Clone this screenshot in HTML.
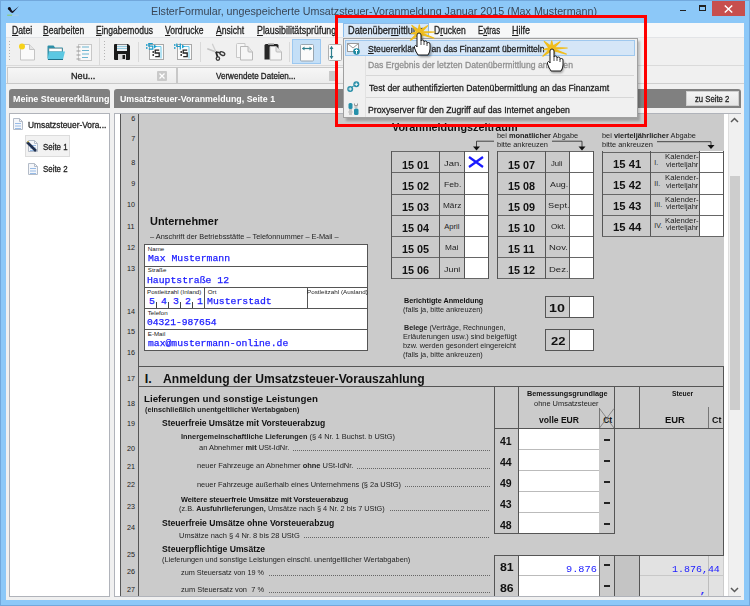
<!DOCTYPE html><html style=""><head><meta charset="utf-8">
<style>
*{margin:0;padding:0;box-sizing:border-box}
html,body{width:750px;height:606px;overflow:hidden}
body{position:relative;background:#8cc8f8;font-family:"Liberation Sans",sans-serif;color:#000}
.a{position:absolute}
.t{position:absolute;white-space:nowrap;line-height:1}
.ui{-webkit-text-stroke:0.3px currentColor}
.mo{-webkit-text-stroke:0.25px currentColor}
u{text-decoration:underline;text-underline-offset:0.5px;text-decoration-thickness:1px}
svg{position:absolute;overflow:visible}
</style></head><body style="">

<div class="a" style="left:0px;top:0px;width:750px;height:606px;border:1px solid #72a8dc"></div>
<div class="t" style="left: 151.09px; top: 6px; font-size: 11.8px; color: rgb(58, 70, 86); transform: scaleX(0.9082); transform-origin: 0px 0px;">ElsterFormular, ungespeicherte Umsatzsteuer-Voranmeldung Januar 2015 (Max Mustermann)</div>
<svg style="left:4px;top:2px" width="20" height="18"><path d="M4 6.2Q5 4.8 6.4 6Q7.5 8 8.6 9.2Q11 7.5 14.8 4.2Q12 7.5 9 10.8Q7.2 11.2 6 9.5Q4.8 8 4 6.2Z" fill="#151525"></path><circle cx="5.4" cy="6.4" r="1.5" fill="#101018"></circle><path d="M3.2 13.2h5" stroke="#8ccc6a" stroke-width="1.1"></path><path d="M8.2 13.2h6.6" stroke="#a8cce8" stroke-width="1"></path></svg>
<div class="a" style="left:680px;top:9.5px;width:6px;height:1.6px;background:#222"></div>
<div class="a" style="left:699px;top:5px;width:7px;height:6px;border:1px solid #222;border-top-width:2px"></div>
<div class="a" style="left:712px;top:1px;width:33px;height:15px;background:#c74f4e"></div>
<svg style="left:724px;top:5px" width="9" height="8"><path d="M0.8 0.5L8.2 7.5M8.2 0.5L0.8 7.5" stroke="#fff" stroke-width="1.5"></path></svg>
<div class="a" style="left:6px;top:23px;width:738px;height:577px;background:#f0f0f0"></div>
<div class="a" style="left:6px;top:23px;width:738px;height:14px;background:#f6f7f8"></div>
<div class="a" style="left:6px;top:37px;width:738px;height:1px;background:#e2e4e7"></div>
<div class="a" style="left:343px;top:23px;width:86px;height:14px;background:#d8e8f8;border:1px solid #8cbcea;border-bottom:none"></div>
<div class="t ui" style="left: 11.6px; top: 26px; font-size: 10.2px; color: rgb(30, 30, 30); transform: scaleX(0.8522); transform-origin: 0px 0px;"><u>D</u>atei</div>
<div class="t ui" style="left: 43.2px; top: 26px; font-size: 10.2px; color: rgb(30, 30, 30); transform: scaleX(0.8367); transform-origin: 0px 0px;"><u>B</u>earbeiten</div>
<div class="t ui" style="left: 96.4px; top: 26px; font-size: 10.2px; color: rgb(30, 30, 30); transform: scaleX(0.8382); transform-origin: 0px 0px;"><u>E</u>ingabemodus</div>
<div class="t ui" style="left: 165.3px; top: 26px; font-size: 10.2px; color: rgb(30, 30, 30); transform: scaleX(0.8413); transform-origin: 0px 0px;"><u>V</u>ordrucke</div>
<div class="t ui" style="left: 216.3px; top: 26px; font-size: 10.2px; color: rgb(30, 30, 30); transform: scaleX(0.8441); transform-origin: 0px 0px;"><u>A</u>nsicht</div>
<div class="t ui" style="left: 257.3px; top: 26px; font-size: 10.2px; color: rgb(30, 30, 30); transform: scaleX(0.8681); transform-origin: 0px 0px;"><u>P</u>lausibilitätsprüfung</div>
<div class="t ui" style="left: 347.8px; top: 26px; font-size: 10.2px; color: rgb(30, 30, 30); transform: scaleX(0.9024); transform-origin: 0px 0px;">Datenüber<u>m</u>ittlung</div>
<div class="t ui" style="left: 434.16px; top: 26px; font-size: 10.2px; color: rgb(30, 30, 30); transform: scaleX(0.8378); transform-origin: 0px 0px;">D<u>r</u>ucken</div>
<div class="t ui" style="left: 477.84px; top: 26px; font-size: 10.2px; color: rgb(30, 30, 30); transform: scaleX(0.7643); transform-origin: 0px 0px;">E<u>x</u>tras</div>
<div class="t ui" style="left: 512.4px; top: 26px; font-size: 10.2px; color: rgb(30, 30, 30); transform: scaleX(0.88); transform-origin: 0px 0px;"><u>H</u>ilfe</div>
<div class="a" style="left:6px;top:65px;width:738px;height:1px;background:#dadada"></div>
<div class="a" style="left:9px;top:41px;width:1px;height:21px;background:repeating-linear-gradient(#b4b4b4 0 1px,transparent 1px 3px)"></div>
<div class="a" style="left:104px;top:41px;width:1px;height:21px;background:repeating-linear-gradient(#b4b4b4 0 1px,transparent 1px 3px)"></div>
<div class="a" style="left:99px;top:38px;width:1px;height:27px;background:#d9d9d9"></div>
<div class="a" style="left:138px;top:42px;width:1px;height:20px;background:#d9d9d9"></div>
<div class="a" style="left:200px;top:42px;width:1px;height:20px;background:#d9d9d9"></div>
<div class="a" style="left:289px;top:42px;width:1px;height:20px;background:#d9d9d9"></div>
<div class="a" style="left:292px;top:39px;width:29px;height:25px;background:#c4dff7;border:1px solid #9cc8f0"></div>
<div class="a" style="left:6px;top:83px;width:738px;height:1px;background:#cfcfcf"></div>
<div class="a" style="left:7px;top:67px;width:170px;height:17px;background:linear-gradient(#f6f6f6,#ececec);border:1px solid #c8c8c8"></div>
<div class="t ui" style="left: 70.72px; top: 72px; font-size: 9.3px; color: rgb(32, 32, 32); transform: scaleX(0.9783); transform-origin: 0px 0px;">Neu...</div>
<div class="a" style="left:177px;top:67px;width:168px;height:17px;background:linear-gradient(#f6f6f6,#ececec);border:1px solid #c8c8c8"></div>
<div class="t ui" style="left: 215.6px; top: 72px; font-size: 9.3px; color: rgb(32, 32, 32); transform: scaleX(0.8681); transform-origin: 0px 0px;">Verwendete Dateien...</div>
<div class="a" style="left:157px;top:71px;width:10px;height:10px;background:#c9c9c9;border-radius:1px"></div>
<svg style="left:159px;top:73px" width="6" height="6"><path d="M0.5 0.5L5.5 5.5M5.5 0.5L0.5 5.5" stroke="#fff" stroke-width="1.3"></path></svg>
<div class="a" style="left:329px;top:71px;width:8px;height:10px;background:#c9c9c9"></div>
<div class="a" style="left:9px;top:89px;width:101px;height:19px;background:#808080;border-radius:3px 3px 0 0"></div>
<div class="a" style="left:114px;top:89px;width:627px;height:19px;background:#808080;border-radius:3px 3px 0 0"></div>
<div class="t" style="left: 13.26px; top: 95px; font-size: 8.6px; font-weight: bold; color: rgb(255, 255, 255); transform: scaleX(1.0407); transform-origin: 0px 0px;">Meine Steuererklärung</div>
<div class="t" style="left: 119.6px; top: 95px; font-size: 8.6px; font-weight: bold; color: rgb(255, 255, 255); transform: scaleX(1.0252); transform-origin: 0px 0px;">Umsatzsteuer-Voranmeldung, Seite 1</div>
<div class="a" style="left:686px;top:91px;width:53px;height:15px;background:linear-gradient(#f3f3f3,#e6e6e6);border:1px solid #cfcfcf"></div>
<div class="t ui" style="left: 695.2px; top: 95px; font-size: 9.3px; color: rgb(32, 32, 32); transform: scaleX(0.8293); transform-origin: 0px 0px;">zu Seite 2</div>
<div class="a" style="left:9px;top:113px;width:101px;height:484px;background:#fff;border:1px solid #b0b3ba"></div>
<div class="a" style="left:114px;top:113px;width:627px;height:484px;background:#fff;border:1px solid #b0b3ba"></div>
<svg style="left:13px;top:118px" width="10" height="12"><path d="M0.5 0.5h6l3 3v8h-9z" fill="#f4f6fa" stroke="#b4bcc8"></path><path d="M6.5 0.5v3h3" fill="none" stroke="#b4bcc8"></path><path d="M2 5.5h6M2 8h6M2 10.5h6" stroke="#8cb4e4" stroke-width="0.9"></path></svg>
<div class="t ui" style="left: 28px; top: 121px; font-size: 9.2px; color: rgb(30, 30, 30); transform: scaleX(0.907); transform-origin: 0px 0px;">Umsatzsteuer-Vora...</div>
<div class="a" style="left:25px;top:135px;width:45px;height:22px;background:#f2f2f2;border:1px solid #dcdcdc"></div>
<svg style="left:28px;top:140px" width="10" height="12"><path d="M0.5 0.5h6l3 3v8h-9z" fill="#f4f6fa" stroke="#b4bcc8"></path><path d="M6.5 0.5v3h3" fill="none" stroke="#b4bcc8"></path><path d="M2 5.5h6M2 8h6M2 10.5h6" stroke="#8cb4e4" stroke-width="0.9"></path></svg>
<svg style="left:26px;top:140px" width="13" height="13"><path d="M1 2L10 11" stroke="#1f2f4f" stroke-width="2.6"></path><path d="M1 2L3 1.5" stroke="#d8c050" stroke-width="1"></path></svg>
<div class="t ui" style="left: 42.6px; top: 143px; font-size: 9.2px; color: rgb(30, 30, 30); transform: scaleX(0.8571); transform-origin: 0px 0px;">Seite 1</div>
<svg style="left:28px;top:163px" width="10" height="12"><path d="M0.5 0.5h6l3 3v8h-9z" fill="#f4f6fa" stroke="#b4bcc8"></path><path d="M6.5 0.5v3h3" fill="none" stroke="#b4bcc8"></path><path d="M2 5.5h6M2 8h6M2 10.5h6" stroke="#8cb4e4" stroke-width="0.9"></path></svg>
<div class="t ui" style="left: 42.6px; top: 165px; font-size: 9.2px; color: rgb(30, 30, 30); transform: scaleX(0.8571); transform-origin: 0px 0px;">Seite 2</div>
<div class="a" style="left:115px;top:114px;width:5px;height:482px;background:#fff"></div>
<div class="a" style="left:120px;top:114px;width:604px;height:482px;background:#cbcbcb"></div>
<div class="a" style="left:120px;top:114px;width:1px;height:482px;background:#555"></div>
<div class="a" style="left:138px;top:114px;width:1px;height:482px;background:#555"></div>
<div class="a" style="left:728px;top:114px;width:13px;height:482px;background:#f0f0f0;border-left:1px solid #dedede"></div>
<div class="a" style="left:730px;top:176px;width:10px;height:234px;background:#cdcdcd"></div>
<svg style="left:730px;top:117px" width="9" height="6"><path d="M1 5L4.5 1.5L8 5" fill="none" stroke="#5a5a5a" stroke-width="1.5"></path></svg>
<svg style="left:730px;top:587px" width="9" height="6"><path d="M1 1L4.5 4.5L8 1" fill="none" stroke="#5a5a5a" stroke-width="1.5"></path></svg>
<div class="t" style="left:131.25px;top:115px;font-size:7.2px;color:#222;">6</div>
<div class="t" style="left:131.25px;top:135px;font-size:7.2px;color:#222;">7</div>
<div class="t" style="left:131.25px;top:159px;font-size:7.2px;color:#222;">8</div>
<div class="t" style="left:131.25px;top:180px;font-size:7.2px;color:#222;">9</div>
<div class="t" style="left:126.95px;top:201px;font-size:7.2px;color:#222;">10</div>
<div class="t" style="left:126.95px;top:223px;font-size:7.2px;color:#222;">11</div>
<div class="t" style="left:126.95px;top:244px;font-size:7.2px;color:#222;">12</div>
<div class="t" style="left:126.95px;top:265px;font-size:7.2px;color:#222;">13</div>
<div class="t" style="left:126.95px;top:308px;font-size:7.2px;color:#222;">14</div>
<div class="t" style="left:126.95px;top:328px;font-size:7.2px;color:#222;">15</div>
<div class="t" style="left:126.95px;top:349px;font-size:7.2px;color:#222;">16</div>
<div class="t" style="left:126.95px;top:375px;font-size:7.2px;color:#222;">17</div>
<div class="t" style="left:126.95px;top:400px;font-size:7.2px;color:#222;">18</div>
<div class="t" style="left:126.95px;top:420px;font-size:7.2px;color:#222;">19</div>
<div class="t" style="left:126.95px;top:445px;font-size:7.2px;color:#222;">20</div>
<div class="t" style="left:126.95px;top:463px;font-size:7.2px;color:#222;">21</div>
<div class="t" style="left:126.95px;top:481px;font-size:7.2px;color:#222;">22</div>
<div class="t" style="left:126.95px;top:503px;font-size:7.2px;color:#222;">23</div>
<div class="t" style="left:126.95px;top:524px;font-size:7.2px;color:#222;">24</div>
<div class="t" style="left:126.95px;top:551px;font-size:7.2px;color:#222;">25</div>
<div class="t" style="left:126.95px;top:568px;font-size:7.2px;color:#222;">26</div>
<div class="t" style="left:126.95px;top:586px;font-size:7.2px;color:#222;">27</div>
<div class="t" style="left: 392px; top: 122px; font-size: 11px; font-weight: bold; color: rgb(17, 17, 17); transform: scaleX(0.9843); transform-origin: 0px 0px;">Voranmeldungszeitraum</div>
<div class="t" style="left: 496.54px; top: 132px; font-size: 7px; color: rgb(34, 34, 34); transform: scaleX(1.0587); transform-origin: 0px 0px;">bei <b>monatlicher</b> Abgabe</div>
<div class="t" style="left: 496.53px; top: 141px; font-size: 7px; color: rgb(34, 34, 34); transform: scaleX(1.0652); transform-origin: 0px 0px;">bitte ankreuzen</div>
<div class="t" style="left: 601.55px; top: 132px; font-size: 7px; color: rgb(34, 34, 34); transform: scaleX(1.0534); transform-origin: 0px 0px;">bei <b>vierteljährlicher</b> Abgabe</div>
<div class="t" style="left: 601.53px; top: 141px; font-size: 7px; color: rgb(34, 34, 34); transform: scaleX(1.0652); transform-origin: 0px 0px;">bitte ankreuzen</div>
<svg style="left:0;top:0" width="750" height="606"><path d="M494 141.2 L476.5 141.2 L476.5 147" fill="none" stroke="#222" stroke-width="0.8"></path><path d="M473.0 146.5L480.0 146.5L476.5 150.5Z" fill="#111"></path></svg>
<svg style="left:0;top:0" width="750" height="606"><path d="M552 141.2 L582 141.2 L582 147" fill="none" stroke="#222" stroke-width="0.8"></path><path d="M578.5 146.5L585.5 146.5L582 150.5Z" fill="#111"></path></svg>
<svg style="left:0;top:0" width="750" height="606"><path d="M657 141.7 L711 141.7 L711 146" fill="none" stroke="#222" stroke-width="0.8"></path><path d="M707.5 145L714.5 145L711 149Z" fill="#111"></path></svg>
<div class="a" style="left:391px;top:151px;width:73px;height:127px;background:#cbcbcb"></div>
<div class="a" style="left:464px;top:151px;width:24px;height:127px;background:#fff"></div>
<div class="a" style="left:391px;top:151px;width:98px;height:1px;background:#666"></div>
<div class="a" style="left:391px;top:172px;width:98px;height:1px;background:#666"></div>
<div class="a" style="left:391px;top:194px;width:98px;height:1px;background:#666"></div>
<div class="a" style="left:391px;top:215px;width:98px;height:1px;background:#666"></div>
<div class="a" style="left:391px;top:236px;width:98px;height:1px;background:#666"></div>
<div class="a" style="left:391px;top:257px;width:98px;height:1px;background:#666"></div>
<div class="a" style="left:391px;top:278px;width:98px;height:1px;background:#666"></div>
<div class="a" style="left:391px;top:151px;width:1px;height:128px;background:#555"></div>
<div class="a" style="left:439px;top:151px;width:1px;height:128px;background:#555"></div>
<div class="a" style="left:464px;top:151px;width:1px;height:128px;background:#555"></div>
<div class="a" style="left:488px;top:151px;width:1px;height:128px;background:#555"></div>
<div class="t" style="left: 401.54px; top: 161px; font-size: 10.2px; font-weight: bold; color: rgb(17, 17, 17); transform: scaleX(1.0625); transform-origin: 0px 0px;">15 01</div>
<div class="t" style="left: 443.7px; top: 160px; font-size: 7.6px; color: rgb(34, 34, 34); transform: scaleX(1.2455); transform-origin: 0px 0px;">Jan.</div>
<div class="t" style="left: 401.54px; top: 182px; font-size: 10.2px; font-weight: bold; color: rgb(17, 17, 17); transform: scaleX(1.0625); transform-origin: 0px 0px;">15 02</div>
<div class="t" style="left: 443.81px; top: 181px; font-size: 7.6px; color: rgb(34, 34, 34); transform: scaleX(1.1417); transform-origin: 0px 0px;">Feb.</div>
<div class="t" style="left: 401.54px; top: 203px; font-size: 10.2px; font-weight: bold; color: rgb(17, 17, 17); transform: scaleX(1.0625); transform-origin: 0px 0px;">15 03</div>
<div class="t" style="left: 442.56px; top: 202px; font-size: 7.6px; color: rgb(34, 34, 34); transform: scaleX(1.0867); transform-origin: 0px 0px;">März</div>
<div class="t" style="left: 401.54px; top: 224px; font-size: 10.2px; font-weight: bold; color: rgb(17, 17, 17); transform: scaleX(1.0625); transform-origin: 0px 0px;">15 04</div>
<div class="t" style="left: 444.3px; top: 223px; font-size: 7.6px; color: rgb(34, 34, 34); transform: scaleX(1); transform-origin: 0px 0px;">April</div>
<div class="t" style="left: 401.54px; top: 245px; font-size: 10.2px; font-weight: bold; color: rgb(17, 17, 17); transform: scaleX(1.0625); transform-origin: 0px 0px;">15 05</div>
<div class="t" style="left: 444.71px; top: 244px; font-size: 7.6px; color: rgb(34, 34, 34); transform: scaleX(1.0909); transform-origin: 0px 0px;">Mai</div>
<div class="t" style="left: 401.54px; top: 266px; font-size: 10.2px; font-weight: bold; color: rgb(17, 17, 17); transform: scaleX(1.0625); transform-origin: 0px 0px;">15 06</div>
<div class="t" style="left: 444.18px; top: 266px; font-size: 7.6px; color: rgb(34, 34, 34); transform: scaleX(1.1727); transform-origin: 0px 0px;">Juni</div>
<div class="a" style="left:497px;top:151px;width:72px;height:127px;background:#cbcbcb"></div>
<div class="a" style="left:569px;top:151px;width:24px;height:127px;background:#fff"></div>
<div class="a" style="left:497px;top:151px;width:97px;height:1px;background:#666"></div>
<div class="a" style="left:497px;top:172px;width:97px;height:1px;background:#666"></div>
<div class="a" style="left:497px;top:194px;width:97px;height:1px;background:#666"></div>
<div class="a" style="left:497px;top:215px;width:97px;height:1px;background:#666"></div>
<div class="a" style="left:497px;top:236px;width:97px;height:1px;background:#666"></div>
<div class="a" style="left:497px;top:257px;width:97px;height:1px;background:#666"></div>
<div class="a" style="left:497px;top:278px;width:97px;height:1px;background:#666"></div>
<div class="a" style="left:497px;top:151px;width:1px;height:128px;background:#555"></div>
<div class="a" style="left:545px;top:151px;width:1px;height:128px;background:#555"></div>
<div class="a" style="left:569px;top:151px;width:1px;height:128px;background:#555"></div>
<div class="a" style="left:593px;top:151px;width:1px;height:128px;background:#555"></div>
<div class="t" style="left: 507.54px; top: 161px; font-size: 10.2px; font-weight: bold; color: rgb(17, 17, 17); transform: scaleX(1.0625); transform-origin: 0px 0px;">15 07</div>
<div class="t" style="left: 551.24px; top: 160px; font-size: 7.6px; color: rgb(34, 34, 34); transform: scaleX(1.01); transform-origin: 0px 0px;">Juli</div>
<div class="t" style="left: 507.54px; top: 182px; font-size: 10.2px; font-weight: bold; color: rgb(17, 17, 17); transform: scaleX(1.0625); transform-origin: 0px 0px;">15 08</div>
<div class="t" style="left: 549.7px; top: 181px; font-size: 7.6px; color: rgb(34, 34, 34); transform: scaleX(1.1692); transform-origin: 0px 0px;">Aug.</div>
<div class="t" style="left: 507.54px; top: 203px; font-size: 10.2px; font-weight: bold; color: rgb(17, 17, 17); transform: scaleX(1.0625); transform-origin: 0px 0px;">15 09</div>
<div class="t" style="left: 547.59px; top: 202px; font-size: 7.6px; color: rgb(34, 34, 34); transform: scaleX(1.2143); transform-origin: 0px 0px;">Sept.</div>
<div class="t" style="left: 507.54px; top: 224px; font-size: 10.2px; font-weight: bold; color: rgb(17, 17, 17); transform: scaleX(1.0625); transform-origin: 0px 0px;">15 10</div>
<div class="t" style="left: 550.9px; top: 223px; font-size: 7.6px; color: rgb(34, 34, 34); transform: scaleX(1.0667); transform-origin: 0px 0px;">Okt.</div>
<div class="t" style="left: 507.54px; top: 245px; font-size: 10.2px; font-weight: bold; color: rgb(17, 17, 17); transform: scaleX(1.0625); transform-origin: 0px 0px;">15 11</div>
<div class="t" style="left: 548.55px; top: 244px; font-size: 7.6px; color: rgb(34, 34, 34); transform: scaleX(1.25); transform-origin: 0px 0px;">Nov.</div>
<div class="t" style="left: 507.54px; top: 266px; font-size: 10.2px; font-weight: bold; color: rgb(17, 17, 17); transform: scaleX(1.0625); transform-origin: 0px 0px;">15 12</div>
<div class="t" style="left: 548.55px; top: 266px; font-size: 7.6px; color: rgb(34, 34, 34); transform: scaleX(1.25); transform-origin: 0px 0px;">Dez.</div>
<svg style="left:468px;top:156px" width="16" height="12"><path d="M1 1L15 11M15 1L1 11" stroke="#1a1aff" stroke-width="2.2"></path></svg>
<div class="a" style="left:602px;top:151px;width:97px;height:85px;background:#cbcbcb"></div>
<div class="a" style="left:699px;top:151px;width:24px;height:85px;background:#fff"></div>
<div class="a" style="left:602px;top:152px;width:122px;height:1px;background:#666"></div>
<div class="a" style="left:602px;top:172px;width:122px;height:1px;background:#666"></div>
<div class="a" style="left:602px;top:194px;width:122px;height:1px;background:#666"></div>
<div class="a" style="left:602px;top:215px;width:122px;height:1px;background:#666"></div>
<div class="a" style="left:602px;top:236px;width:122px;height:1px;background:#666"></div>
<div class="a" style="left:602px;top:151px;width:1px;height:85px;background:#555"></div>
<div class="a" style="left:650px;top:151px;width:1px;height:85px;background:#555"></div>
<div class="a" style="left:699px;top:151px;width:1px;height:85px;background:#555"></div>
<div class="a" style="left:723px;top:151px;width:1px;height:85px;background:#555"></div>
<div class="t" style="left: 612.79px; top: 160px; font-size: 10.2px; font-weight: bold; color: rgb(17, 17, 17); transform: scaleX(1.1083); transform-origin: 0px 0px;">15 41</div>
<div class="t" style="left:654.36px;top:159px;font-size:7px;color:#222;">I.</div>
<div class="t" style="left: 664.63px; top: 154px; font-size: 6.6px; color: rgb(34, 34, 34); transform: scaleX(1.1741); transform-origin: 0px 0px;">Kalender-</div>
<div class="t" style="left: 665.8px; top: 162px; font-size: 6.6px; color: rgb(34, 34, 34); transform: scaleX(1.1321); transform-origin: 0px 0px;">vierteljahr</div>
<div class="t" style="left: 612.79px; top: 181px; font-size: 10.2px; font-weight: bold; color: rgb(17, 17, 17); transform: scaleX(1.1083); transform-origin: 0px 0px;">15 42</div>
<div class="t" style="left:654.36px;top:180px;font-size:7px;color:#222;">II.</div>
<div class="t" style="left: 664.63px; top: 175px; font-size: 6.6px; color: rgb(34, 34, 34); transform: scaleX(1.1741); transform-origin: 0px 0px;">Kalender-</div>
<div class="t" style="left: 665.8px; top: 183px; font-size: 6.6px; color: rgb(34, 34, 34); transform: scaleX(1.1321); transform-origin: 0px 0px;">vierteljahr</div>
<div class="t" style="left: 612.79px; top: 202px; font-size: 10.2px; font-weight: bold; color: rgb(17, 17, 17); transform: scaleX(1.1083); transform-origin: 0px 0px;">15 43</div>
<div class="t" style="left:654.36px;top:201px;font-size:7px;color:#222;">III.</div>
<div class="t" style="left: 664.63px; top: 197px; font-size: 6.6px; color: rgb(34, 34, 34); transform: scaleX(1.1741); transform-origin: 0px 0px;">Kalender-</div>
<div class="t" style="left: 665.8px; top: 204px; font-size: 6.6px; color: rgb(34, 34, 34); transform: scaleX(1.1321); transform-origin: 0px 0px;">vierteljahr</div>
<div class="t" style="left: 612.79px; top: 223px; font-size: 10.2px; font-weight: bold; color: rgb(17, 17, 17); transform: scaleX(1.1083); transform-origin: 0px 0px;">15 44</div>
<div class="t" style="left:654.36px;top:222px;font-size:7px;color:#222;">IV.</div>
<div class="t" style="left: 664.63px; top: 218px; font-size: 6.6px; color: rgb(34, 34, 34); transform: scaleX(1.1741); transform-origin: 0px 0px;">Kalender-</div>
<div class="t" style="left: 665.8px; top: 225px; font-size: 6.6px; color: rgb(34, 34, 34); transform: scaleX(1.1321); transform-origin: 0px 0px;">vierteljahr</div>
<div class="t" style="left: 150.17px; top: 216px; font-size: 10.6px; font-weight: bold; color: rgb(17, 17, 17); transform: scaleX(1.0338); transform-origin: 0px 0px;">Unternehmer</div>
<div class="t" style="left: 149.93px; top: 233px; font-size: 7.6px; color: rgb(34, 34, 34); transform: scaleX(0.9724); transform-origin: 0px 0px;">– Anschrift der Betriebsstätte – Telefonnummer – E-Mail –</div>
<div class="a" style="left:144px;top:244px;width:224px;height:107px;background:#fff;border:1px solid #555"></div>
<div class="a" style="left:144px;top:266px;width:224px;height:1px;background:#555"></div>
<div class="a" style="left:144px;top:287px;width:224px;height:1px;background:#555"></div>
<div class="a" style="left:144px;top:308px;width:224px;height:1px;background:#555"></div>
<div class="a" style="left:144px;top:329px;width:224px;height:1px;background:#555"></div>
<div class="a" style="left:204px;top:287px;width:1px;height:22px;background:#555"></div>
<div class="a" style="left:307px;top:287px;width:1px;height:22px;background:#555"></div>
<div class="t" style="left:147.78px;top:246px;font-size:6.2px;color:#222;">Name</div>
<div class="t mo" style="left: 147.7px; top: 254px; font-size: 9.7px; color: rgb(26, 26, 255); font-family: &quot;Liberation Mono&quot;, monospace; transform: scaleX(1.0074); transform-origin: 0px 0px;">Max Mustermann</div>
<div class="t" style="left:147.78px;top:267px;font-size:6.2px;color:#222;">Straße</div>
<div class="t mo" style="left: 146.69px; top: 276px; font-size: 9.7px; color: rgb(26, 26, 255); font-family: &quot;Liberation Mono&quot;, monospace; transform: scaleX(1.0075); transform-origin: 0px 0px;">Hauptstraße 12</div>
<div class="t" style="left: 147px; top: 289px; font-size: 6.2px; color: rgb(34, 34, 34); transform: scaleX(1); transform-origin: 0px 0px;">Postleitzahl (Inland)</div>
<div class="t" style="left:207.78px;top:289px;font-size:6.2px;color:#222;">Ort</div>
<div class="t" style="left: 306.78px; top: 289px; font-size: 6.2px; color: rgb(34, 34, 34); transform: scaleX(1.0155); transform-origin: 0px 0px;">Postleitzahl (Ausland)</div>
<div class="t mo" style="left:148.91px;top:297px;font-size:9.7px;color:#1a1aff;font-family:'Liberation Mono',monospace;">5</div>
<div class="t mo" style="left:160.91px;top:297px;font-size:9.7px;color:#1a1aff;font-family:'Liberation Mono',monospace;">4</div>
<div class="t mo" style="left:172.91px;top:297px;font-size:9.7px;color:#1a1aff;font-family:'Liberation Mono',monospace;">3</div>
<div class="t mo" style="left:184.91px;top:297px;font-size:9.7px;color:#1a1aff;font-family:'Liberation Mono',monospace;">2</div>
<div class="t mo" style="left:196.91px;top:297px;font-size:9.7px;color:#1a1aff;font-family:'Liberation Mono',monospace;">1</div>
<div class="a" style="left:156px;top:302px;width:1px;height:6px;background:#444"></div>
<div class="a" style="left:168px;top:302px;width:1px;height:6px;background:#444"></div>
<div class="a" style="left:180px;top:302px;width:1px;height:6px;background:#444"></div>
<div class="a" style="left:192px;top:302px;width:1px;height:6px;background:#444"></div>
<div class="t mo" style="left: 207.2px; top: 297px; font-size: 9.7px; color: rgb(26, 26, 255); font-family: &quot;Liberation Mono&quot;, monospace; transform: scaleX(1.0111); transform-origin: 0px 0px;">Musterstadt</div>
<div class="t" style="left:147.78px;top:310px;font-size:6.2px;color:#222;">Telefon</div>
<div class="t mo" style="left: 147.1px; top: 318px; font-size: 9.7px; color: rgb(26, 26, 255); font-family: &quot;Liberation Mono&quot;, monospace; transform: scaleX(0.9957); transform-origin: 0px 0px;">04321-987654</div>
<div class="t" style="left:147.78px;top:331px;font-size:6.2px;color:#222;">E-Mail</div>
<div class="t mo" style="left: 147.5px; top: 339px; font-size: 9.7px; color: rgb(26, 26, 255); font-family: &quot;Liberation Mono&quot;, monospace; transform: scaleX(1.005); transform-origin: 0px 0px;">max@mustermann-online.de</div>
<div class="t" style="left: 404px; top: 297px; font-size: 7.2px; font-weight: bold; color: rgb(17, 17, 17); transform: scaleX(1.0051); transform-origin: 0px 0px;">Berichtigte Anmeldung</div>
<div class="t" style="left: 402.98px; top: 306px; font-size: 7.2px; color: rgb(34, 34, 34); transform: scaleX(1.0182); transform-origin: 0px 0px;">(falls ja, bitte ankreuzen)</div>
<div class="t" style="left: 404px; top: 324px; font-size: 7.2px; color: rgb(34, 34, 34); transform: scaleX(0.996); transform-origin: 0px 0px;"><b>Belege</b> (Verträge, Rechnungen,</div>
<div class="t" style="left: 402.97px; top: 333px; font-size: 7.2px; color: rgb(34, 34, 34); transform: scaleX(1.0275); transform-origin: 0px 0px;">Erläuterungen usw.) sind beigefügt</div>
<div class="t" style="left: 402.98px; top: 342px; font-size: 7.2px; color: rgb(34, 34, 34); transform: scaleX(1.0182); transform-origin: 0px 0px;">bzw. werden gesondert eingereicht</div>
<div class="t" style="left: 402.98px; top: 351px; font-size: 7.2px; color: rgb(34, 34, 34); transform: scaleX(1.0182); transform-origin: 0px 0px;">(falls ja, bitte ankreuzen)</div>
<div class="a" style="left:545px;top:296px;width:49px;height:22px;background:#fff;border:1px solid #555"></div>
<div class="a" style="left:546px;top:297px;width:23px;height:20px;background:#cbcbcb"></div>
<div class="a" style="left:569px;top:296px;width:1px;height:22px;background:#555"></div>
<div class="t" style="left: 549.2px; top: 304px; font-size: 10.2px; font-weight: bold; color: rgb(17, 17, 17); transform: scaleX(1.4); transform-origin: 0px 0px;">10</div>
<div class="a" style="left:545px;top:329px;width:49px;height:22px;background:#fff;border:1px solid #555"></div>
<div class="a" style="left:546px;top:330px;width:23px;height:20px;background:#cbcbcb"></div>
<div class="a" style="left:569px;top:329px;width:1px;height:22px;background:#555"></div>
<div class="t" style="left: 550.6px; top: 337px; font-size: 10.2px; font-weight: bold; color: rgb(17, 17, 17); transform: scaleX(1.2727); transform-origin: 0px 0px;">22</div>
<div class="a" style="left:139px;top:366px;width:585px;height:1px;background:#555"></div>
<div class="a" style="left:139px;top:386px;width:585px;height:1px;background:#555"></div>
<div class="t" style="left:144.76px;top:373px;font-size:12.6px;font-weight:bold;color:#111;">I.</div>
<div class="t" style="left: 163.4px; top: 373px; font-size: 12.6px; font-weight: bold; color: rgb(17, 17, 17); transform: scaleX(0.9616); transform-origin: 0px 0px;">Anmeldung der Umsatzsteuer-Vorauszahlung</div>
<div class="t" style="left: 144.1px; top: 394px; font-size: 9.8px; font-weight: bold; color: rgb(17, 17, 17); transform: scaleX(0.9954); transform-origin: 0px 0px;">Lieferungen und sonstige Leistungen</div>
<div class="t" style="left: 145.1px; top: 407px; font-size: 6.8px; font-weight: bold; color: rgb(34, 34, 34); transform: scaleX(1.0655); transform-origin: 0px 0px;">(einschließlich unentgeltlicher Wertabgaben)</div>
<div class="t" style="left: 162.33px; top: 419px; font-size: 8.8px; font-weight: bold; color: rgb(17, 17, 17); transform: scaleX(0.9683); transform-origin: 0px 0px;">Steuerfreie Umsätze mit Vorsteuerabzug</div>
<div class="t" style="left: 181px; top: 433px; font-size: 7.2px; color: rgb(34, 34, 34); transform: scaleX(1.024); transform-origin: 0px 0px;"><b>Innergemeinschaftliche Lieferungen</b> (§ 4 Nr. 1 Buchst. b UStG)</div>
<div class="t" style="left: 198.8px; top: 444px; font-size: 7.2px; color: rgb(34, 34, 34); transform: scaleX(1.0376); transform-origin: 0px 0px;">an Abnehmer <b>mit</b> USt-IdNr.</div>
<div class="t" style="left: 197.46px; top: 462px; font-size: 7.2px; color: rgb(34, 34, 34); transform: scaleX(1.0408); transform-origin: 0px 0px;">neuer Fahrzeuge an Abnehmer <b>ohne</b> USt-IdNr.</div>
<div class="t" style="left: 197.47px; top: 481px; font-size: 7.2px; color: rgb(34, 34, 34); transform: scaleX(1.0311); transform-origin: 0px 0px;">neuer Fahrzeuge außerhalb eines Unternehmens (§ 2a UStG)</div>
<div class="t" style="left: 180.5px; top: 496px; font-size: 7.2px; font-weight: bold; color: rgb(17, 17, 17); transform: scaleX(1.0152); transform-origin: 0px 0px;">Weitere steuerfreie Umsätze mit Vorsteuerabzug</div>
<div class="t" style="left: 179.48px; top: 505px; font-size: 7.2px; color: rgb(34, 34, 34); transform: scaleX(1.0215); transform-origin: 0px 0px;">(z.B. <b>Ausfuhrlieferungen,</b> Umsätze nach § 4 Nr. 2 bis 7 UStG)</div>
<div class="t" style="left: 161.62px; top: 519px; font-size: 8.8px; font-weight: bold; color: rgb(17, 17, 17); transform: scaleX(0.9766); transform-origin: 0px 0px;">Steuerfreie Umsätze ohne Vorsteuerabzug</div>
<div class="t" style="left: 179.46px; top: 532px; font-size: 7.2px; color: rgb(34, 34, 34); transform: scaleX(1.0421); transform-origin: 0px 0px;">Umsätze nach § 4 Nr. 8 bis 28 UStG</div>
<div class="t" style="left: 161.62px; top: 545px; font-size: 8.8px; font-weight: bold; color: rgb(17, 17, 17); transform: scaleX(0.9817); transform-origin: 0px 0px;">Steuerpflichtige Umsätze</div>
<div class="t" style="left: 161.58px; top: 556px; font-size: 7.2px; color: rgb(34, 34, 34); transform: scaleX(1.0224); transform-origin: 0px 0px;">(Lieferungen und sonstige Leistungen einschl. unentgeltlicher Wertabgaben)</div>
<div class="t" style="left: 180.5px; top: 569px; font-size: 7.2px; color: rgb(34, 34, 34); transform: scaleX(1.0136); transform-origin: 0px 0px;">zum Steuersatz von 19 %</div>
<div class="t" style="left: 180.5px; top: 586px; font-size: 7.2px; color: rgb(34, 34, 34); transform: scaleX(1.0392); transform-origin: 0px 0px;">zum Steuersatz von &nbsp;7 %</div>
<div class="a" style="left:293.3px;top:450.1px;width:196.3px;height:1px;background:repeating-linear-gradient(90deg,#666 0 1px,transparent 1px 2px)"></div>
<div class="a" style="left:357px;top:468.2px;width:132.60000000000002px;height:1px;background:repeating-linear-gradient(90deg,#666 0 1px,transparent 1px 2px)"></div>
<div class="a" style="left:404.9px;top:486.4px;width:84.70000000000005px;height:1px;background:repeating-linear-gradient(90deg,#666 0 1px,transparent 1px 2px)"></div>
<div class="a" style="left:390px;top:509.8px;width:99.60000000000002px;height:1px;background:repeating-linear-gradient(90deg,#666 0 1px,transparent 1px 2px)"></div>
<div class="a" style="left:304.4px;top:537.1px;width:185.20000000000005px;height:1px;background:repeating-linear-gradient(90deg,#666 0 1px,transparent 1px 2px)"></div>
<div class="a" style="left:269px;top:574.5px;width:220.60000000000002px;height:1px;background:repeating-linear-gradient(90deg,#666 0 1px,transparent 1px 2px)"></div>
<div class="a" style="left:269px;top:591.5px;width:220.60000000000002px;height:1px;background:repeating-linear-gradient(90deg,#666 0 1px,transparent 1px 2px)"></div>
<div class="a" style="left:494px;top:386px;width:230px;height:1px;background:#555"></div>
<div class="a" style="left:494px;top:386px;width:1px;height:148px;background:#555"></div>
<div class="a" style="left:518px;top:386px;width:1px;height:148px;background:#555"></div>
<div class="a" style="left:614px;top:386px;width:1px;height:148px;background:#555"></div>
<div class="a" style="left:639px;top:386px;width:1px;height:42px;background:#555"></div>
<div class="a" style="left:723px;top:366px;width:1px;height:230px;background:#555"></div>
<div class="a" style="left:494px;top:428px;width:230px;height:1px;background:#555"></div>
<div class="a" style="left:599px;top:408px;width:1px;height:20px;background:#777"></div>
<div class="a" style="left:708px;top:407px;width:1px;height:21px;background:#777"></div>
<div class="t" style="left: 526.7px; top: 391px; font-size: 6.8px; font-weight: bold; color: rgb(17, 17, 17); transform: scaleX(1.0707); transform-origin: 0px 0px;">Bemessungsgrundlage</div>
<div class="t" style="left: 533.61px; top: 401px; font-size: 6.8px; color: rgb(34, 34, 34); transform: scaleX(1.0948); transform-origin: 0px 0px;">ohne Umsatzsteuer</div>
<div class="t" style="left: 539.4px; top: 416px; font-size: 8.4px; font-weight: bold; color: rgb(17, 17, 17); transform: scaleX(1.0231); transform-origin: 0px 0px;">volle EUR</div>
<div class="t" style="left: 603.2px; top: 416px; font-size: 8.4px; font-weight: bold; color: rgb(17, 17, 17); transform: scaleX(1); transform-origin: 0px 0px;">Ct</div>
<svg style="left:599px;top:408px" width="16" height="20"><path d="M0.5 0.5L15 20M15 0.5L0.5 20" stroke="#777" stroke-width="0.8"></path></svg>
<div class="t" style="left: 671.9px; top: 391px; font-size: 6.8px; font-weight: bold; color: rgb(17, 17, 17); transform: scaleX(0.9952); transform-origin: 0px 0px;">Steuer</div>
<div class="t" style="left: 664.78px; top: 416px; font-size: 8.4px; font-weight: bold; color: rgb(17, 17, 17); transform: scaleX(1.1235); transform-origin: 0px 0px;">EUR</div>
<div class="t" style="left: 712px; top: 416px; font-size: 8.4px; font-weight: bold; color: rgb(17, 17, 17); transform: scaleX(1.0556); transform-origin: 0px 0px;">Ct</div>
<div class="a" style="left:519px;top:429px;width:80px;height:104px;background:#fff"></div>
<div class="a" style="left:519px;top:449px;width:80px;height:1px;background:#bbb"></div>
<div class="a" style="left:519px;top:470px;width:80px;height:1px;background:#bbb"></div>
<div class="a" style="left:519px;top:491px;width:80px;height:1px;background:#bbb"></div>
<div class="a" style="left:519px;top:512px;width:80px;height:1px;background:#bbb"></div>
<div class="a" style="left:494px;top:533px;width:121px;height:1px;background:#555"></div>
<div class="t" style="left: 499.8px; top: 435px; font-size: 11.6px; font-weight: bold; color: rgb(17, 17, 17); transform: scaleX(0.9077); transform-origin: 0px 0px;">41</div>
<div class="a" style="left:604px;top:440px;width:6px;height:1px;background:#222"></div>
<div class="a" style="left:604px;top:439px;width:6px;height:2px;background:#222"></div>
<div class="t" style="left: 499.8px; top: 456px; font-size: 11.6px; font-weight: bold; color: rgb(17, 17, 17); transform: scaleX(0.9077); transform-origin: 0px 0px;">44</div>
<div class="a" style="left:604px;top:461px;width:6px;height:1px;background:#222"></div>
<div class="a" style="left:604px;top:460px;width:6px;height:2px;background:#222"></div>
<div class="t" style="left: 499.8px; top: 477px; font-size: 11.6px; font-weight: bold; color: rgb(17, 17, 17); transform: scaleX(0.9077); transform-origin: 0px 0px;">49</div>
<div class="a" style="left:604px;top:482px;width:6px;height:1px;background:#222"></div>
<div class="a" style="left:604px;top:481px;width:6px;height:2px;background:#222"></div>
<div class="t" style="left: 499.8px; top: 498px; font-size: 11.6px; font-weight: bold; color: rgb(17, 17, 17); transform: scaleX(0.9077); transform-origin: 0px 0px;">43</div>
<div class="a" style="left:604px;top:502px;width:6px;height:1px;background:#222"></div>
<div class="a" style="left:604px;top:502px;width:6px;height:2px;background:#222"></div>
<div class="t" style="left: 499.8px; top: 519px; font-size: 11.6px; font-weight: bold; color: rgb(17, 17, 17); transform: scaleX(0.9077); transform-origin: 0px 0px;">48</div>
<div class="a" style="left:604px;top:524px;width:6px;height:1px;background:#222"></div>
<div class="a" style="left:604px;top:523px;width:6px;height:2px;background:#222"></div>
<div class="a" style="left:494px;top:555px;width:230px;height:41px;background:#cbcbcb"></div>
<div class="a" style="left:494px;top:555px;width:230px;height:1px;background:#555"></div>
<div class="a" style="left:519px;top:556px;width:80px;height:40px;background:#fff"></div>
<div class="a" style="left:519px;top:575px;width:80px;height:1px;background:#bbb"></div>
<div class="a" style="left:615px;top:556px;width:24px;height:40px;background:#c4c4c4"></div>
<div class="a" style="left:640px;top:556px;width:83px;height:40px;background:#e2e2e2"></div>
<div class="a" style="left:640px;top:575px;width:83px;height:1px;background:#c8c8c8"></div>
<div class="a" style="left:708px;top:556px;width:1px;height:40px;background:#bdbdbd"></div>
<div class="a" style="left:494px;top:555px;width:1px;height:41px;background:#555"></div>
<div class="a" style="left:518px;top:555px;width:1px;height:41px;background:#555"></div>
<div class="a" style="left:599px;top:555px;width:1px;height:41px;background:#777"></div>
<div class="a" style="left:614px;top:555px;width:1px;height:41px;background:#555"></div>
<div class="a" style="left:639px;top:555px;width:1px;height:41px;background:#555"></div>
<div class="t" style="left: 500px; top: 563px; font-size: 10.2px; font-weight: bold; color: rgb(17, 17, 17); transform: scaleX(1.2091); transform-origin: 0px 0px;">81</div>
<div class="t" style="left: 500px; top: 584px; font-size: 10.2px; font-weight: bold; color: rgb(17, 17, 17); transform: scaleX(1.2091); transform-origin: 0px 0px;">86</div>
<div class="a" style="left:604px;top:564px;width:6px;height:2px;background:#222"></div>
<div class="a" style="left:604px;top:585px;width:6px;height:2px;background:#222"></div>
<div class="t mo" style="left: 566.24px; top: 565px; font-size: 9.7px; color: rgb(26, 26, 255); font-family: &quot;Liberation Mono&quot;, monospace; -webkit-text-stroke: 0px; transform: scaleX(1.063); transform-origin: 0px 0px;">9.876</div>
<div class="t mo" style="left: 671.67px; top: 565px; font-size: 9.7px; color: rgb(26, 26, 255); font-family: &quot;Liberation Mono&quot;, monospace; -webkit-text-stroke: 0px; transform: scaleX(1.0289); transform-origin: 0px 0px;">1.876,44</div>
<div class="t mo" style="left:700.11px;top:586px;font-size:9.7px;color:#1a1aff;font-family:'Liberation Mono',monospace;">,</div>
<div class="a" style="left:346px;top:41px;width:294px;height:80px;background:rgba(0,0,0,0.22);filter:blur(1.2px)"></div>
<div class="a" style="left:343px;top:38px;width:295px;height:80px;background:#f0f0f0;border:1px solid #a0a0a0"></div>
<div class="a" style="left:365px;top:40px;width:1px;height:77px;background:#e2e2e2"></div>
<div class="a" style="left:345px;top:40px;width:290px;height:16px;background:#d5e6f7;border:1px solid #9fc8ee"></div>
<div class="a" style="left:366px;top:75px;width:268px;height:1px;background:#d7d7d7"></div>
<div class="a" style="left:366px;top:97px;width:268px;height:1px;background:#d7d7d7"></div>
<div class="t ui" style="left: 368.4px; top: 44px; font-size: 9.8px; color: rgb(30, 30, 30); transform: scaleX(0.8761); transform-origin: 0px 0px;"><u>S</u>teuererklärung an das Finanzamt übermitteln</div>
<div class="t ui" style="left: 367.52px; top: 60px; font-size: 9.8px; color: rgb(143, 143, 143); transform: scaleX(0.8814); transform-origin: 0px 0px;">Das Ergebnis der letzten Datenübermittlung anzeigen</div>
<div class="t ui" style="left: 369px; top: 83px; font-size: 9.8px; color: rgb(30, 30, 30); transform: scaleX(0.8889); transform-origin: 0px 0px;">Test der authentifizierten Datenübermittlung an das Finanzamt</div>
<div class="t ui" style="left: 368.11px; top: 105px; font-size: 9.8px; color: rgb(30, 30, 30); transform: scaleX(0.8876); transform-origin: 0px 0px;">Proxyserver für den Zugriff auf das Internet angeben</div>
<div class="a" style="left:335px;top:15px;width:312px;height:112px;border:3px solid #ff0000"></div>
<svg style="left:20px;top:44px" width="16" height="17"><path d="M0.5 0.5h9l5 5v10.5h-14z" fill="#fafafa" stroke="#c4c4c4"></path><path d="M9.5 0.5v5h5" fill="#e4e4e4" stroke="#c4c4c4"></path><circle cx="2" cy="2.5" r="3" fill="#f6d21a"></circle></svg>
<svg style="left:47px;top:45px" width="18" height="15"><path d="M0.5 1.5q0-1 1-1h5l1.5 2h7q1 0 1 1v10h-15.5z" fill="#2d8fa8"></path><rect x="2" y="3.5" width="13" height="3" fill="#fff" stroke="#999" stroke-width="0.5"></rect><path d="M0.5 14.5l1.5-8h16l-2 8z" fill="#5cc8e2"></path><path d="M1 14.5h15" stroke="#1f7088" stroke-width="1"></path></svg>
<svg style="left:76px;top:44px" width="16" height="17"><rect x="2.5" y="0.5" width="13" height="16" fill="#f8f8f8" stroke="#c8c8c8"></rect><path d="M0.5 3h4M0.5 7h4M0.5 11h4M0.5 15h4" stroke="#999" stroke-width="1.2"></path><path d="M6 3h7M6 6.5h7M6 10h7M6 13.5h6" stroke="#6ab4d0" stroke-width="1"></path></svg>
<svg style="left:114px;top:44px" width="16" height="16"><path d="M0 1q0-1 1-1h13l2 2v13q0 1-1 1h-14q-1 0-1-1z" fill="#1a1a1a"></path><rect x="3" y="0.5" width="10" height="6.5" fill="#e8eef2"></rect><path d="M3 2.5h10M3 4.5h10" stroke="#7cc0d8" stroke-width="0.8"></path><rect x="4" y="10" width="8" height="6" fill="#d8d8d8"></rect><rect x="8.5" y="11" width="2.5" height="4" fill="#1a1a1a"></rect></svg>
<svg style="left:146px;top:43px" width="18" height="18"><rect x="3.5" y="1.5" width="14" height="15" fill="#fafafa" stroke="#a8a8a8"></rect><path d="M10 3.5h5v12" fill="none" stroke="#6ccbec" stroke-width="1"></path><path d="M8 1.5l2.8 2-2.8 2z" fill="#1aa0d0"></path><path d="M0.8 1v2M0.8 4v2" stroke="#1a9ac8" stroke-width="1.2"></path><path d="M6.8 0.6h-4v2.6h4v3h-4" fill="none" stroke="#1a9ac8" stroke-width="1.2"></path><path d="M7.2 8v2M7.2 11v2" stroke="#222" stroke-width="1.3"></path><path d="M13.2 7.2h-4v2.8h4v3.6h-4" fill="none" stroke="#222" stroke-width="1.3"></path></svg>
<svg style="left:174px;top:43px" width="18" height="18"><rect x="3.5" y="1.5" width="14" height="15" fill="#fafafa" stroke="#a8a8a8"></rect><path d="M10 3.5h5v12" fill="none" stroke="#6ccbec" stroke-width="1"></path><path d="M8 1.5l2.8 2-2.8 2z" fill="#1aa0d0"></path><path d="M0.8 1v2M0.8 4v2" stroke="#1a9ac8" stroke-width="1.2"></path><path d="M2.8 0.5v3h4M6.3 0.5v6" fill="none" stroke="#1a9ac8" stroke-width="1.2"></path><path d="M7.2 8v2M7.2 11v2" stroke="#222" stroke-width="1.3"></path><path d="M13.2 7.2h-4v2.8h4v3.6h-4" fill="none" stroke="#222" stroke-width="1.3"></path></svg>
<svg style="left:205px;top:42px" width="24" height="20"><path d="M3 7L11 10" stroke="#c4c4c4" stroke-width="1.8" stroke-linecap="round"></path><path d="M7.5 2.3L11 10" stroke="#cfcfcf" stroke-width="1.3" stroke-linecap="round"></path><path d="M11 10L15.5 10.8" stroke="#333" stroke-width="1.6"></path><ellipse cx="17.3" cy="11.6" rx="2.6" ry="1.6" transform="rotate(25 17.3 11.6)" fill="none" stroke="#3a3a3a" stroke-width="1.3"></ellipse><path d="M11 10L12.6 15" stroke="#222" stroke-width="1.8"></path><circle cx="12.9" cy="16.6" r="1.7" fill="none" stroke="#3a3a3a" stroke-width="1.3"></circle></svg>
<svg style="left:236px;top:43px" width="18" height="18"><path d="M0.5 1.5q0-1 1-1h7.5v14h-8.5z" fill="#f7f7f7" stroke="#c8c8c8"></path><path d="M4.5 3.5h7.5l4.5 5.5v8h-12z" fill="#f6f6f6" stroke="#b8b8b8"></path><path d="M12 3.5v4.5q0 1 1 1h3.5" fill="#e4e4e4" stroke="#b8b8b8"></path></svg>
<svg style="left:264px;top:43px" width="19" height="18"><path d="M0.5 2.5q0-1.5 1.5-1.5h11q1.5 0 1.5 1.5v14h-14z" fill="#262626"></path><rect x="4" y="0.3" width="6" height="1.6" fill="#a8a8a8"></rect><path d="M6 3.5h6l5.5 5.5v8h-11.5z" fill="#f6f6f6" stroke="#bcbcbc"></path><path d="M12 3.5v4.5q0 1 1 1h4.5" fill="#e6e6e6" stroke="#bcbcbc"></path></svg>
<svg style="left:300px;top:44px" width="15" height="18"><rect x="0.5" y="0.5" width="13" height="16.5" rx="1" fill="#fbfbfb" stroke="#9aa6b0"></rect><path d="M2.5 4.5h9" stroke="#2e7f8e" stroke-width="1.2"></path><path d="M2 4.5l2.5-2v4zM12 4.5l-2.5-2v4z" fill="#2e7f8e"></path></svg>
<svg style="left:328px;top:44px" width="15" height="17"><rect x="0.5" y="0.5" width="13" height="16" rx="1" fill="#fbfbfb" stroke="#b0b0b0"></rect><path d="M3.5 2.5v12" stroke="#2e7f8e" stroke-width="1.2"></path><path d="M3.5 2l-2 3h4zM3.5 15l-2-3h4z" fill="#2e7f8e"></path></svg>
<svg style="left:347px;top:43px" width="14" height="12"><rect x="0.5" y="0.5" width="11" height="8" fill="#fff" stroke="#9a9a9a"></rect><path d="M0.5 0.5l5.5 4.5 5.5-4.5" fill="none" stroke="#9a9a9a"></path><circle cx="9.5" cy="8.5" r="3.3" fill="#1f8aa0"></circle><path d="M9.5 10.8v-4M8 8l1.5-1.5 1.5 1.5" stroke="#fff" stroke-width="1" fill="none"></path></svg>
<svg style="left:347px;top:81px" width="13" height="12"><circle cx="3.2" cy="8" r="3" fill="#2a8fa8"></circle><circle cx="9.3" cy="3.3" r="3" fill="#2a8fa8"></circle><path d="M3.2 6.3v3.4M1.5 8h3.4M9.3 1.6v3.4M7.6 3.3h3.4" stroke="#fff" stroke-width="0.9"></path><path d="M5 6l2.5-1.5" stroke="#2a8fa8" stroke-width="1"></path></svg>
<svg style="left:348px;top:103px" width="11" height="12"><rect x="0.5" y="0" width="4" height="6" rx="1.5" fill="#2690aa"></rect><path d="M1 7h3M0.5 9h4M1 11h3" stroke="#999" stroke-width="1"></path><path d="M6.5 0.5v2h3v-2M6.5 4h3" stroke="#999" stroke-width="1" fill="none"></path><rect x="6" y="5.5" width="4.5" height="6.5" rx="1.5" fill="#2690aa"></rect></svg>
<svg style="left:0;top:0" width="750" height="606"><polygon points="411.9,25.4 418.2,30.0 419.3,24.8 420.6,30.1 427.7,25.7 422.1,31.7 434.8,32.0 422.3,33.2 433.9,38.1 421.6,34.7 421.8,37.1 419.8,35.8 418.4,37.7 417.8,35.4 410.5,40.2 416.5,33.9 411.3,33.5 416.5,31.8" fill="#f0bd1e" stroke="#f0bd1e" stroke-width="1.2" stroke-linejoin="round" style="filter:blur(0.4px)"></polygon></svg>
<svg style="left:415.8px;top:35.3px;filter:blur(1.2px)" width="18" height="24"><path d="M3 2Q3 0 5 0Q7 0 7 2L7 8Q7 7 8.5 7Q10 7 10 8.5L10 9Q10 8 11.5 8Q13 8 13 9.5L13 10.5Q13 9.5 14.5 9.5Q16 9.5 16 11L16 16Q16 19 14 22L4 22Q2 19 0.5 15Q0 13 1.5 12.5Q2.5 12.5 3 14Z" fill="rgba(0,0,0,0.35)"></path></svg>
<svg style="left:414.3px;top:33.3px" width="18" height="24"><path d="M3 2Q3 0 5 0Q7 0 7 2L7 8Q7 7 8.5 7Q10 7 10 8.5L10 9Q10 8 11.5 8Q13 8 13 9.5L13 10.5Q13 9.5 14.5 9.5Q16 9.5 16 11L16 16Q16 19 14 22L4 22Q2 19 0.5 15Q0 13 1.5 12.5Q2.5 12.5 3 14Z" fill="#fff" stroke="#1a1a1a" stroke-width="1"></path><path d="M7 8v4M10 9v3M13 10.5v2.5" stroke="#1a1a1a" stroke-width="0.8"></path></svg>
<svg style="left:0;top:0" width="750" height="606"><polygon points="544.3,41.4 550.6,46.0 551.7,40.8 553.0,46.1 560.1,41.7 554.5,47.7 567.2,48.0 554.7,49.2 566.3,54.1 554.0,50.7 554.2,53.1 552.2,51.8 550.8,53.7 550.2,51.4 542.9,56.2 548.9,49.9 543.7,49.5 548.9,47.8" fill="#f0bd1e" stroke="#f0bd1e" stroke-width="1.2" stroke-linejoin="round" style="filter:blur(0.4px)"></polygon></svg>
<svg style="left:548.2px;top:51.3px;filter:blur(1.2px)" width="18" height="24"><path d="M3 2Q3 0 5 0Q7 0 7 2L7 8Q7 7 8.5 7Q10 7 10 8.5L10 9Q10 8 11.5 8Q13 8 13 9.5L13 10.5Q13 9.5 14.5 9.5Q16 9.5 16 11L16 16Q16 19 14 22L4 22Q2 19 0.5 15Q0 13 1.5 12.5Q2.5 12.5 3 14Z" fill="rgba(0,0,0,0.35)"></path></svg>
<svg style="left:546.7px;top:49.3px" width="18" height="24"><path d="M3 2Q3 0 5 0Q7 0 7 2L7 8Q7 7 8.5 7Q10 7 10 8.5L10 9Q10 8 11.5 8Q13 8 13 9.5L13 10.5Q13 9.5 14.5 9.5Q16 9.5 16 11L16 16Q16 19 14 22L4 22Q2 19 0.5 15Q0 13 1.5 12.5Q2.5 12.5 3 14Z" fill="#fff" stroke="#1a1a1a" stroke-width="1"></path><path d="M7 8v4M10 9v3M13 10.5v2.5" stroke="#1a1a1a" stroke-width="0.8"></path></svg>
</body></html>
